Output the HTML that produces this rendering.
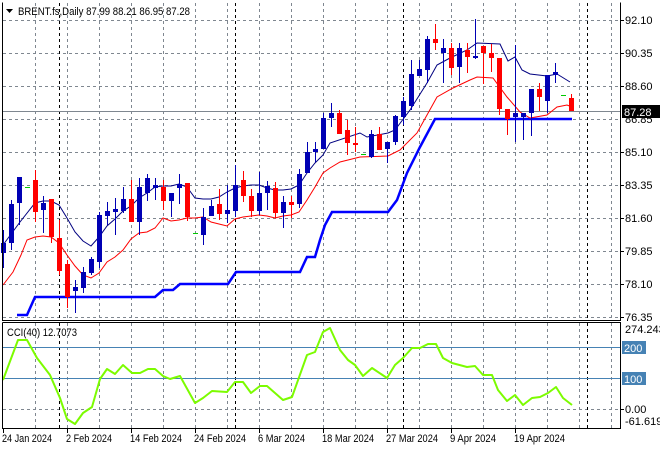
<!DOCTYPE html>
<html><head><meta charset="utf-8"><style>
html,body{margin:0;padding:0;background:#fff;width:660px;height:450px;overflow:hidden}
svg{display:block}
text{font-family:"Liberation Sans",sans-serif;font-size:11px;fill:#000}
</style></head><body>
<svg width="660" height="450" viewBox="0 0 660 450" xmlns="http://www.w3.org/2000/svg">
<rect width="660" height="450" fill="#fff"/>
<g stroke="#7f8790" stroke-width="1" stroke-dasharray="3,3" fill="none">
<path d="M3 20.5H620M3 53.5H620M3 86.5H620M3 119.5H620M3 152.5H620M3 185.5H620M3 218.5H620M3 251.5H620M3 284.5H620M3 317.5H620"/>
<path d="M35.5 3V320M67.5 3V320M99.5 3V320M131.5 3V320M163.5 3V320M195.5 3V320M227.5 3V320M259.5 3V320M291.5 3V320M323.5 3V320M355.5 3V320M387.5 3V320M419.5 3V320M451.5 3V320M483.5 3V320M515.5 3V320M547.5 3V320M579.5 3V320M611.5 3V320"/>
<path d="M35.5 323V428M67.5 323V428M99.5 323V428M131.5 323V428M163.5 323V428M195.5 323V428M227.5 323V428M259.5 323V428M291.5 323V428M323.5 323V428M355.5 323V428M387.5 323V428M419.5 323V428M451.5 323V428M483.5 323V428M515.5 323V428M547.5 323V428M579.5 323V428M611.5 323V428"/>
<path d="M3 409.5H620"/>
</g>
<g stroke="#000" stroke-width="1" stroke-dasharray="3,3">
<path d="M59.5 3V320M235.5 3V320M403.5 3V320M587.5 3V320M59.5 323V428M235.5 323V428M403.5 323V428M587.5 323V428"/>
</g>
<line x1="3" y1="111.5" x2="620" y2="111.5" stroke="#7f8790"/>
<polyline fill="none" stroke="#0000ff" stroke-width="2.5" points="17,315 27,315 35,297 155,297 163,290 173,290 180,284 228,284 236,272 300,272 307,257 315,257 320,240 325,225 332,212 388,212 397,200 407,173 420,147 435,119 572,119"/>
<polyline fill="none" stroke="#ff0000" stroke-width="1" points="3,285 13,272 21,255 27,240 35,237 43,236 51,237 59,243 67,255 75,266 83,275 91,278 99,273 107,262 115,257 123,250 131,239 139,233 147,232 155,228 163,218 171,221 179,220 187,218 195,218 203,217 211,222 219,224 227,226 235,219 243,217 259,215 267,216 275,218 283,216 291,215 299,212 307,200 315,187 323,173 330,168 340,162 360,157 388,156 400,150 417,133 437,97 453,88 470,80 477,77 493,78 507,97 520,112 530,118 547,115 557,107 567,105 572,107"/>
<polyline fill="none" stroke="#000080" stroke-width="1" points="3,245 20,222 35,203 43,201 51,201 59,205 67,218 75,232 83,241 91,246 99,237 107,226 115,219 123,211 131,206 139,198 147,193 155,187 163,186 171,186 179,184 187,187 195,198 203,199 211,199 219,197 227,192 235,188 243,186 251,185 259,185 267,188 275,190 283,190 291,189 299,185 307,173 315,163 323,155 330,143 360,133 367,137 388,133 395,130 410,110 427,83 437,65 450,58 467,50 477,43 500,44 508,61 515,57 522,70 530,74 547,76 557,74 570,82"/>
<g>
<g fill="#0000b4" stroke="#0000b4">
<path stroke-width="1" fill="none" d="M3.5 230V268M11.5 200V250M19.5 177V225M43.5 196V233M75.5 280V313M83.5 267V293M91.5 257V275M99.5 212V268M107.5 202V225M115.5 198V235M123.5 187V213M139.5 178V235M147.5 174V201M155.5 178V200M171.5 193V217M179.5 174V204M203.5 208V245M211.5 200V216M227.5 185V223M235.5 165V217M259.5 172V215M267.5 181V210M283.5 196V228M299.5 169V208M307.5 142V173M315.5 142V162M323.5 113V149M331.5 103V127M371.5 130V158M387.5 142V163M395.5 115V145M403.5 97V125M411.5 60V110M419.5 60V76M427.5 36V83M443.5 39V83M459.5 43V83M475.5 19V59M515.5 45V142M523.5 113V140M531.5 89V136M547.5 75V113M555.5 63V83"/>
<path stroke="none" d="M1 243h5v10h-5zM9 204h5v39h-5zM17 177h5v26h-5zM41 203h5v7h-5zM73 287h5v4h-5zM81 272h5v16h-5zM89 259h5v14h-5zM97 215h5v47h-5zM105 211h5v5h-5zM113 209h5v3h-5zM121 199h5v12h-5zM137 187h5v35h-5zM145 178h5v15h-5zM153 185h5v3h-5zM169 193h5v8h-5zM177 184h5v4h-5zM201 217h5v18h-5zM209 206h5v10h-5zM225 210h5v4h-5zM233 185h5v26h-5zM257 193h5v18h-5zM265 186h5v7h-5zM281 202h5v11h-5zM297 174h5v30h-5zM305 152h5v21h-5zM313 149h5v3h-5zM321 118h5v31h-5zM329 113h5v5h-5zM369 134h5v23h-5zM385 142h5v7h-5zM393 116h5v26h-5zM401 101h5v16h-5zM409 74h5v32h-5zM417 69h5v7h-5zM425 39h5v31h-5zM441 48h5v5h-5zM457 48h5v19h-5zM473 56h5v2h-5zM513 113h5v4h-5zM521 113h5v4h-5zM529 89h5v24h-5zM545 75h5v26h-5zM553 72h5v3h-5z"/>
</g>
<g fill="#ff0000" stroke="#ff0000">
<path stroke-width="1" fill="none" d="M35.5 170V222M51.5 199V243M59.5 220V275M67.5 260V308M131.5 180V222M163.5 180V210M187.5 183V221M219.5 189V220M243.5 171V202M251.5 189V217M275.5 182V218M291.5 196V218M339.5 110V134M347.5 120V155M355.5 127V152M379.5 127V150M435.5 24V50M451.5 43V75M467.5 43V73M483.5 46V84M491.5 44V72M499.5 58V115M507.5 109V135M539.5 83V111M571.5 94V111"/>
<path stroke="none" d="M33 180h5v32h-5zM49 199h5v38h-5zM57 238h5v33h-5zM65 264h5v33h-5zM129 199h5v23h-5zM161 187h5v14h-5zM185 183h5v34h-5zM217 204h5v10h-5zM241 180h5v16h-5zM249 196h5v15h-5zM273 188h5v25h-5zM289 202h5v3h-5zM337 113h5v21h-5zM345 130h5v13h-5zM353 143h5v2h-5zM377 134h5v16h-5zM433 39h5v4h-5zM449 48h5v20h-5zM465 50h5v7h-5zM481 46h5v7h-5zM489 53h5v5h-5zM497 58h5v51h-5zM505 109h5v10h-5zM537 89h5v8h-5zM569 98h5v13h-5z"/>
</g>
<path stroke="#00c800" stroke-width="1" d="M25 187.5h5M193 233.5h5M361 154.5h5M561 95.5h5"/>
</g>
<line x1="3" y1="347.5" x2="620" y2="347.5" stroke="#4682b4"/>
<line x1="3" y1="378.5" x2="620" y2="378.5" stroke="#4682b4"/>
<polyline fill="none" stroke="#7cfc00" stroke-width="2" stroke-linejoin="round" points="3,380 18,340 27,340 37,358 50,375 60,398 67,419 75,424 83,413 92,407 100,379 107,369 115,374 123,365 132,373 140,373 148,369 155,369 163,376 170,379 180,376 195,403 203,398 212,391 227,392 235,382 243,382 251,393 260,386 267,386 283,400 292,397 307,355 315,352 323,332 330,328 340,350 348,360 355,365 363,376 372,368 387,378 395,365 403,358 412,348 420,348 428,344 436,344 443,358 452,363 467,367 475,366 483,375 492,375 498,390 507,401 515,395 523,405 532,398 540,397 548,393 556,387 563,398 572,405"/>
<g fill="none" stroke="#000" stroke-width="1">
<path d="M2.5 2.5V320.5H620.5V2.5"/>
<path d="M2.5 322.5V428.5H620.5V322.5H2.5"/>
<path d="M3.5 429V433M67.5 429V433M131.5 429V433M195.5 429V433M259.5 429V433M323.5 429V433M387.5 429V433M451.5 429V433M515.5 429V433"/>
<path d="M621 20.5h3M621 53.5h3M621 86.5h3M621 152.5h3M621 185.5h3M621 218.5h3M621 251.5h3M621 284.5h3M621 317.5h3M621 409.5h3"/>
</g>
<path d="M6 9h7l-3.5 4z" fill="#000"/>
<text x="18" y="15" textLength="172" lengthAdjust="spacingAndGlyphs">BRENT.fs,Daily  87.99 88.21 86.95 87.28</text>
<text x="7" y="336" textLength="70" lengthAdjust="spacingAndGlyphs">CCI(40) 12.7073</text>
<g style="font-size:10.5px">
<text x="625" y="24">92.10</text>
<text x="625" y="57">90.35</text>
<text x="625" y="90">88.60</text>
<text x="625" y="123">86.85</text>
<text x="625" y="156">85.10</text>
<text x="625" y="189">83.35</text>
<text x="625" y="222">81.60</text>
<text x="625" y="255">79.85</text>
<text x="625" y="288">78.10</text>
<text x="625" y="321">76.35</text>
<rect x="622" y="105" width="38" height="13" fill="#000"/>
<text x="624" y="116" style="fill:#fff">87.28</text>
<text x="625" y="333">274.2435</text>
<rect x="622" y="341" width="24" height="13" fill="#4682b4"/>
<text x="624" y="352" style="fill:#fff">200</text>
<rect x="622" y="372" width="24" height="13" fill="#4682b4"/>
<text x="624" y="383" style="fill:#fff">100</text>
<text x="625" y="413">0.00</text>
<text x="625" y="425">-61.619</text>
</g>
<g style="font-size:10.5px">
<text x="2" y="442" textLength="50" lengthAdjust="spacingAndGlyphs">24 Jan 2024</text>
<text x="66" y="442" textLength="46" lengthAdjust="spacingAndGlyphs">2 Feb 2024</text>
<text x="130" y="442" textLength="52" lengthAdjust="spacingAndGlyphs">14 Feb 2024</text>
<text x="194" y="442" textLength="52" lengthAdjust="spacingAndGlyphs">24 Feb 2024</text>
<text x="258" y="442" textLength="47" lengthAdjust="spacingAndGlyphs">6 Mar 2024</text>
<text x="322" y="442" textLength="52" lengthAdjust="spacingAndGlyphs">18 Mar 2024</text>
<text x="386" y="442" textLength="52" lengthAdjust="spacingAndGlyphs">27 Mar 2024</text>
<text x="450" y="442" textLength="46" lengthAdjust="spacingAndGlyphs">9 Apr 2024</text>
<text x="514" y="442" textLength="51" lengthAdjust="spacingAndGlyphs">19 Apr 2024</text>
</g>
</svg>
</body></html>
